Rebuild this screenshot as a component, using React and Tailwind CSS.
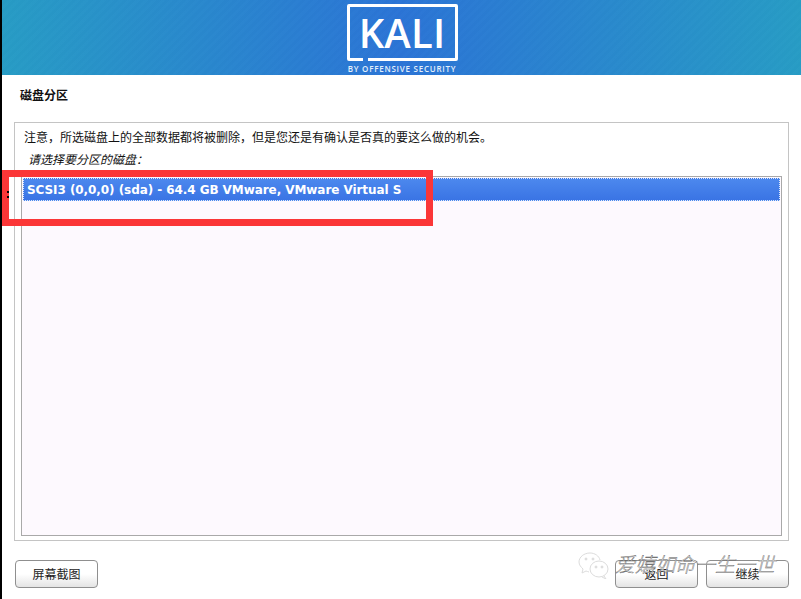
import React from "react";

const CJK = "font-['DejaVu_Sans','Noto_Sans_CJK_SC',sans-serif]";

function KaliLogo() {
  return (
    <div className="ml-[3px] flex flex-col items-center">
      <div className="relative flex h-[57px] w-[111px] items-center justify-center rounded-[2px] border-[3px] border-white">
        <span className="font-['Open_Sans',sans-serif] text-[40px] font-semibold leading-none tracking-[0.2px] text-white">KALI</span>
        <span className="absolute -bottom-[3px] left-[13px] h-[3px] w-[5px] bg-[#2b78d6]" />
      </div>
      <span className="mt-[3px] font-['Open_Sans',sans-serif] text-[8px] font-semibold leading-[9px] tracking-[0.75px] text-[#e3effb]">
        BY OFFENSIVE SECURITY
      </span>
    </div>
  );
}

function Btn({ label }) {
  return (
    <button
      type="button"
      className={`flex h-[28px] w-[83px] items-center justify-center rounded-[4px] border border-[#8f8f8f] bg-gradient-to-b from-white via-white to-[#e4e4e4] pt-[2px] text-[12px] text-[#222] ${CJK}`}
    >
      {label}
    </button>
  );
}

function WechatMark() {
  return (
    <svg width="34" height="28" viewBox="0 0 34 28" fill="none" stroke="#dcdcdc" strokeWidth="1" className="absolute left-[577px] top-[551px]">
      <path d="M13 2c-6 0-11 4-11 9 0 3 2 5 4 7l-1 4 4-2c1 0 2 1 3 1" />
      <path d="M13 2c5 0 9 3 10 7" />
      <ellipse cx="22" cy="18" rx="9" ry="8" fill="white" />
      <path d="M27 25l2 3-4-2" />
      <circle cx="9" cy="8" r="1" fill="#dcdcdc" />
      <circle cx="16" cy="8" r="1" fill="#dcdcdc" />
      <circle cx="19" cy="16" r="1" fill="#dcdcdc" />
      <circle cx="25" cy="16" r="1" fill="#dcdcdc" />
    </svg>
  );
}

export default function App() {
  return (
    <div className="relative h-[599px] w-[801px] overflow-hidden bg-white">
      {/* left black edge */}
      <div className="absolute left-0 top-0 h-full w-[2px] bg-black" />

      {/* banner */}
      <header className="flex h-[75px] items-start justify-center pt-[4px] [background-image:repeating-linear-gradient(135deg,rgba(255,255,255,0.008)_0_3px,rgba(0,0,0,0.008)_3px_6px),linear-gradient(90deg,#279cc5,#2b74d6_50%,#279cc5)]">
        <KaliLogo />
      </header>

      {/* title */}
      <h1 className={`pl-[20px] pt-[13px] text-[12px] font-bold leading-[16px] text-[#111] ${CJK}`}>磁盘分区</h1>

      {/* main frame */}
      <section className="ml-[14px] mr-[12px] mt-[18px] flex h-[419px] flex-col border border-[#c4c4c4] px-[6px] pb-[4px]">
        <p className={`pl-[3px] pt-[7px] text-[12px] leading-[16px] text-[#111] ${CJK}`}>
          注意，所选磁盘上的全部数据都将被删除，但是您还是有确认是否真的要这么做的机会。
        </p>
        <p className={`pl-[7px] pt-[6px] text-[12px] italic leading-[16px] text-[#111] ${CJK}`}>请选择要分区的磁盘：</p>
        <div className="mt-[8px] flex-1 border border-[#a9a9a9] bg-[#fdf9fe] p-[1px]">
          <div className="flex h-[23px] items-center border border-dotted border-[#dfe9fb] bg-gradient-to-b from-[#4c88ee] to-[#3a74e4] pl-[3px] pt-[1px] font-['DejaVu_Sans',sans-serif] text-[12px] font-bold tracking-[-0.07px] text-white">
            SCSI3 (0,0,0) (sda) - 64.4 GB VMware, VMware Virtual S
          </div>
        </div>
      </section>

      {/* buttons */}
      <footer className="mt-[19px] flex pl-[15px] pr-[12px]">
        <Btn label="屏幕截图" />
        <div className="ml-auto flex gap-[8px]">
          <Btn label="返回" />
          <Btn label="继续" />
        </div>
      </footer>

      {/* red annotation */}
      <div className="absolute left-[2px] top-[170px] h-[56px] w-[431px] border-[7px] border-[#fb3637]" />
      {/* pointer dots */}
      <span className="absolute left-[7px] top-[191px] h-[2px] w-[2px] bg-black" />
      <span className="absolute left-[7px] top-[196px] h-[2px] w-[2px] bg-black" />

      {/* watermark */}
      <span className={`absolute left-[615px] top-[551px] text-[20px] font-light italic leading-[28px] text-white [-webkit-text-stroke:0.4px_#555] ${CJK}`}>
        爱嬉如命一生一世
      </span>
      <WechatMark />
    </div>
  );
}
